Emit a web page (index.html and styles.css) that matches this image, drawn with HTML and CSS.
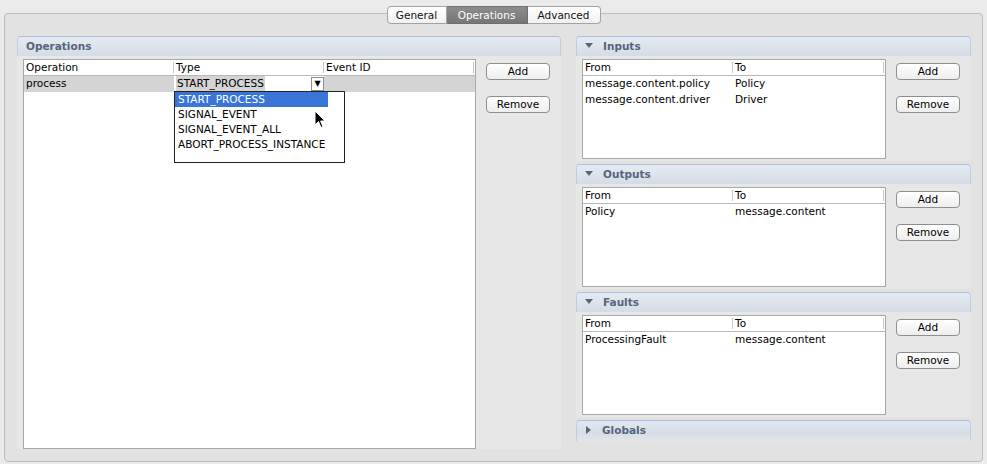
FILE: index.html
```html
<!DOCTYPE html>
<html>
<head>
<meta charset="utf-8">
<link rel="stylesheet" href="styles.css">
</head>
<body>
<div class="frame">
  <div class="tabbar">
    <div class="tab t1">General</div>
    <div class="tab t2 sel">Operations</div>
    <div class="tab t3">Advanced</div>
  </div>
  <div class="content">
    <div class="section left">
      <div class="shead"><span class="stitle">Operations</span></div>
      <div class="sbody">
        <div class="table optable">
          <div class="thead">
            <div class="th c1">Operation</div>
            <div class="th c2">Type</div>
            <div class="th c3">Event ID</div>
          </div>
          <div class="trow selrow">
            <div class="td c1">process</div>
            <div class="td c2 combo">
              <span class="ctext">START_PROCESS</span>
              <span class="cfill"></span>
              <span class="cbtn">▼</span>
              <div class="dropdown">
                <div class="ditem dsel">START_PROCESS</div>
                <div class="ditem">SIGNAL_EVENT</div>
                <div class="ditem">SIGNAL_EVENT_ALL</div>
                <div class="ditem">ABORT_PROCESS_INSTANCE</div>
              </div>
              <svg class="cursor" width="12" height="19" viewBox="0 0 12 19"><path d="M1 1 L1 15 L4.5 11.5 L7 17.5 L9 16.6 L6.6 11 L11 11 Z" fill="#000" stroke="#fff" stroke-width="1"/></svg>
            </div>
            <div class="td c3"></div>
          </div>
        </div>
        <div class="btns">
          <div class="btn">Add</div>
          <div class="btn">Remove</div>
        </div>
      </div>
    </div>
    <div class="rightcol">
      <div class="section">
        <div class="shead"><span class="tri-down"></span><span class="stitle">Inputs</span></div>
        <div class="sbody">
          <div class="table small">
            <div class="thead">
              <div class="th m1">From</div>
              <div class="th m2">To</div>
            </div>
            <div class="trow"><div class="td m1">message.content.policy</div><div class="td m2">Policy</div></div>
            <div class="trow"><div class="td m1">message.content.driver</div><div class="td m2">Driver</div></div>
          </div>
          <div class="btns">
            <div class="btn">Add</div>
            <div class="btn">Remove</div>
          </div>
        </div>
      </div>
      <div class="section">
        <div class="shead"><span class="tri-down"></span><span class="stitle">Outputs</span></div>
        <div class="sbody">
          <div class="table small">
            <div class="thead">
              <div class="th m1">From</div>
              <div class="th m2">To</div>
            </div>
            <div class="trow"><div class="td m1">Policy</div><div class="td m2">message.content</div></div>
          </div>
          <div class="btns">
            <div class="btn">Add</div>
            <div class="btn">Remove</div>
          </div>
        </div>
      </div>
      <div class="section">
        <div class="shead"><span class="tri-down"></span><span class="stitle">Faults</span></div>
        <div class="sbody">
          <div class="table small">
            <div class="thead">
              <div class="th m1">From</div>
              <div class="th m2">To</div>
            </div>
            <div class="trow"><div class="td m1">ProcessingFault</div><div class="td m2">message.content</div></div>
          </div>
          <div class="btns">
            <div class="btn">Add</div>
            <div class="btn">Remove</div>
          </div>
        </div>
      </div>
      <div class="section collapsed">
        <div class="shead"><span class="tri-right"></span><span class="stitle">Globals</span></div>
      </div>
    </div>
  </div>
</div>
</body>
</html>
```
FILE: styles.css
```css
* { box-sizing: border-box; }
html, body { margin: 0; padding: 0; }
body {
  width: 987px;
  height: 464px;
  background: #ebebeb;
  font-family: "DejaVu Sans", "Liberation Sans", sans-serif;
  font-size: 10.5px;
  color: #000;
  overflow: hidden;
}
.frame {
  margin: 13px 4px 0 4px;
  height: 449px;
  border: 1px solid #bdbdbd;
  border-radius: 4px;
  background: #e2e2e2;
}
.tabbar {
  display: flex;
  justify-content: center;
  margin-top: -8px;
}
.tab {
  height: 18px;
  line-height: 16px;
  text-align: center;
  border: 1px solid #a3a3a3;
  border-left: none;
  background: linear-gradient(#ffffff, #f1f1f1);
  color: #111;
}
.t1 { width: 60px; }
.t2 { width: 81px; }
.t3 { width: 73px; }
.tab:first-child { border-left: 1px solid #a3a3a3; border-radius: 4px 0 0 4px; }
.tab:last-child { border-radius: 0 4px 4px 0; }
.tab.sel {
  background: linear-gradient(#8d8d8d, #767676);
  color: #fff;
  border-color: #6f6f6f;
}
.content {
  display: flex;
  gap: 15px;
  padding: 12px 11px 0 12px;
}
.section {
  background: #e7e7e7;
  border-radius: 4px 4px 0 0;
}
.left { width: 544px; height: 413px; display: flex; flex-direction: column; }
.rightcol { width: 395px; display: flex; flex-direction: column; gap: 3px; }
.shead {
  height: 20px;
  display: flex;
  align-items: center;
  padding-left: 8px;
  padding-bottom: 2px;
  border: 1px solid #bdcde2;
  border-top-color: #a9bfdf;
  border-bottom: none;
  border-radius: 4px 4px 0 0;
  background: linear-gradient(#e6ebf2, #d5dce6);
}
.stitle {
  font-weight: bold;
  color: #56657c;
}
.tri-down {
  width: 0; height: 0;
  border-left: 4px solid transparent;
  border-right: 4px solid transparent;
  border-top: 5px solid #56657c;
  margin-right: 10px;
}
.tri-right {
  width: 0; height: 0;
  border-top: 4px solid transparent;
  border-bottom: 4px solid transparent;
  border-left: 5px solid #56657c;
  margin-left: 1px;
  margin-right: 11px;
}
.collapsed .shead {
  height: 21px;
  background: linear-gradient(#e3e8f0 0%, #d6dde6 60%, #e4e6e8 100%);
}
.sbody {
  display: flex;
  gap: 10px;
  padding: 3px 11px 2px 6px;
}
.left .sbody { flex: 1; padding-bottom: 0; }
.table {
  background: #fff;
  border: 1px solid #a7a7a7;
}
.optable { width: 453px; }
.small { width: 304px; height: 100px; }
.thead {
  display: flex;
  height: 16px;
  border-bottom: 1px solid #b8b8b8;
}
.th {
  line-height: 14px;
  padding-left: 2px;
  position: relative;
}
.th::after {
  content: "";
  position: absolute;
  right: 0; top: 2px; bottom: 2px;
  width: 1px;
  background: #c8c8c8;
}
.trow { display: flex; height: 16px; }
.td { line-height: 15px; padding-left: 2px; white-space: nowrap; }
.c1 { width: 150px; }
.c2 { width: 150px; }
.c3 { width: 150px; }
.m1 { width: 150px; }
.m2 { width: 151px; }
.selrow { background: #d4d4d4; width: 451px; }
.combo {
  position: relative;
  display: flex;
  align-items: flex-start;
  padding-left: 2px;
  background: #fff;
}
.ctext { background: #d4d4d4; padding: 0 1px; line-height: 15px; }
.cfill { flex: 1; }
.cbtn {
  width: 13px;
  height: 14px;
  margin-top: 1px;
  border: 1px solid #8c8c8c;
  background: #fff;
  font-size: 8px;
  line-height: 12px;
  text-align: center;
}
.dropdown {
  position: absolute;
  left: 0;
  top: 15px;
  width: 171px;
  height: 72px;
  border: 1px solid #222;
  background: #fff;
  padding-right: 16px;
  z-index: 2;
}
.ditem { height: 15px; line-height: 14px; padding-left: 3px; }
.dsel { background: #3875d7; color: #fff; }
.cursor { position: absolute; left: 140px; top: 34px; z-index: 3; }
.btns {
  display: flex;
  flex-direction: column;
  gap: 16px;
  padding-top: 4px;
}
.btn {
  width: 64px;
  height: 17px;
  line-height: 15px;
  text-align: center;
  border: 1px solid #8f8f8f;
  border-radius: 4px;
  background: linear-gradient(#ffffff, #eeeeee);
}
```
